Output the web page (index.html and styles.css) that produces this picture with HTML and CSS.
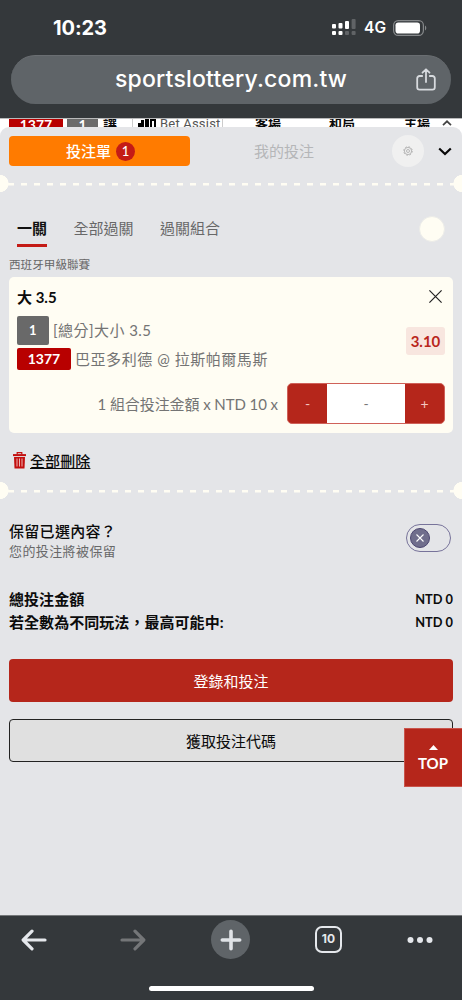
FILE: index.html
```html
<!DOCTYPE html>
<html lang="zh-Hant">
<head>
<meta charset="utf-8">
<title>投注單</title>
<link rel="stylesheet" href="styles.css">
</head>
<body>
<div class="screen">
  <header class="chrome-top">
    <div class="status">
      <span class="time">10:23</span>
      <span class="status-right">
        <svg class="signal" width="24" height="17" viewBox="0 0 24 17" fill="#fff">
          <rect x="0" y="5" width="4" height="4.6" rx="1"/><rect x="6.5" y="4" width="4" height="5.6" rx="1"/><rect x="13" y="2" width="4" height="8" rx="1"/><rect x="19.6" y="0" width="4" height="10" rx="1" opacity=".22"/>
          <rect x="0" y="12" width="4" height="4" rx="1"/><rect x="6.5" y="12" width="4" height="4" rx="1"/><rect x="13" y="12" width="4" height="4" rx="1" opacity=".22"/><rect x="19.6" y="12" width="4" height="4" rx="1" opacity=".22"/>
        </svg>
        <span class="net">4G</span>
        <svg class="battery" width="34" height="16" viewBox="0 0 34 16"><rect x=".6" y=".6" width="29.8" height="14.8" rx="4.6" fill="none" stroke="#85888a" stroke-width="1.2"/><rect x="2.5" y="2.5" width="24.5" height="11" rx="2.8" fill="#fff"/><path d="M32 5.5c1.7.7 1.7 4.3 0 5z" fill="#85888a"/></svg>
      </span>
    </div>
    <div class="url"><span class="domain">sportslottery.com.tw</span>
      <svg class="share" width="20" height="23" viewBox="0 0 20 23" fill="none" stroke="#d7dade" stroke-width="1.8" stroke-linecap="round" stroke-linejoin="round"><path d="M6.2 8H3.6A2.4 2.4 0 0 0 1.2 10.400v8.900a2.400 2.400 0 0 0 2.400 2.400h12.800a2.400 2.400 0 0 0 2.400-2.400v-8.900A2.400 2.400 0 0 0 16.400 8h-2.600M10 14V1.500M6.500 4.700 10 1.300l3.500 3.400"/></svg>
    </div>
  </header>

  <main class="page">
    <div class="behind">
      <span class="b-no">1377</span><span class="b-one">1</span><span class="b-hcp">讓</span>
      <span class="b-assist"><svg width="18" height="20" viewBox="0 0 18 20"><path d="M0 20V8h3V5h3v15zM7 20V4h4v16zM12 20V3h6v17z"/><path d="M14 20V6h2v14z" fill="#fff"/></svg>Bet Assist</span>
      <span class="b-col away">客場</span><span class="b-col draw">和局</span><span class="b-col home">主場</span>
      <svg class="b-up" width="10" height="6" viewBox="0 0 10 6" fill="none" stroke="#444" stroke-width="1.700"><path d="M1 5.200 5 1.300l4 3.900"/></svg>
    </div>

    <section class="sheet">
      <div class="tabs">
        <div class="slip">投注單<span class="count">1</span></div>
        <div class="mine">我的投注</div>
        <div class="gear"><svg width="10" height="10" viewBox="0 0 10 10" fill="none" stroke="#aaa" stroke-width=".8"><circle cx="5" cy="5" r="3.600"/><circle cx="5" cy="5" r="1.500"/><circle cx="5" cy="5" r="4.300" stroke-dasharray="1.690 1.690"/></svg></div>
        <svg class="down" width="14" height="9" viewBox="0 0 14 9" fill="none" stroke="#080808" stroke-width="2.200"><path d="M1.200 1.500 7 7l5.800-5.500"/></svg>
      </div>
      <div class="perf"></div>

      <nav class="modes"><span class="mode on">一關</span><span class="mode">全部過關</span><span class="mode">過關組合</span><i class="dot"></i></nav>
      <div class="league">西班牙甲級聯賽</div>

      <article class="card">
        <div class="card-head"><b>大 3.5</b><svg width="13" height="13" viewBox="0 0 13 13" stroke="#222" stroke-width="1.200"><path d="M.4.400l12.200 12.200M12.600.400.400 12.600"/></svg></div>
        <div class="pick">
          <div class="info">
            <div class="line1"><span class="sq">1</span><span class="market">[總分]大小 3.5</span></div>
            <div class="line2"><span class="no">1377</span><span class="teams">巴亞多利德 @ 拉斯帕爾馬斯</span></div>
          </div>
          <span class="odds">3.10</span>
        </div>
        <div class="stake"><span class="stake-text">1 組合投注金額 x NTD 10 x</span>
          <div class="stepper"><span>-</span><span class="value">-</span><span>+</span></div>
        </div>
      </article>

      <div class="clear">
        <svg width="13" height="17" viewBox="0 0 13 17" fill="none" stroke="#c20f0f"><path d="M0 3.100h13" stroke-width="2"/><path d="M4.200 2.500V.7h4.600v1.800" stroke-width="1.200"/><path d="M1 5h11l-.5 11.500h-10z" fill="#c20f0f" stroke="none"/><path d="M4 6.500v8M6.500 6.500v8M9 6.500v8" stroke="#f0c8c8" stroke-width=".9"/></svg>
        <span>全部刪除</span>
      </div>
      <div class="perf"></div>

      <div class="keep">
        <div class="keep-text"><div class="keep-title">保留已選內容？</div><div class="keep-sub">您的投注將被保留</div></div>
        <div class="toggle"><span class="knob"><svg width="8" height="8" viewBox="0 0 8 8" stroke="#fff" stroke-width="1.100"><path d="M.5.500l7 7M7.500.500l-7 7"/></svg></span></div>
      </div>

      <div class="totals">
        <div class="total"><span class="label">總投注金額</span><span class="amount">NTD 0</span></div>
        <div class="total"><span class="label">若全數為不同玩法，最高可能中:</span><span class="amount">NTD 0</span></div>
      </div>
      <div class="btn primary">登錄和投注</div>
      <div class="btn outline">獲取投注代碼</div>
    </section>
    <div class="top"><svg width="9" height="5" viewBox="0 0 9 5" fill="#fff"><path d="M0 5 4.500 0 9 5z"/></svg>TOP</div>
  </main>

  <footer class="chrome-bottom">
    <div class="tools">
      <svg width="26" height="22" viewBox="0 0 26 22" fill="none" stroke="#e5e8ec" stroke-width="3.200" stroke-linecap="round" stroke-linejoin="round"><path d="M24 11H2.500M11 2.200 2.200 11l8.800 8.800"/></svg>
      <svg class="forward" width="26" height="22" viewBox="0 0 26 22" fill="none" stroke="#747678" stroke-width="3.200" stroke-linecap="round" stroke-linejoin="round"><path d="M2 11h21.500M15 2.200l8.800 8.800-8.800 8.800"/></svg>
      <div class="new"><svg width="22" height="22" viewBox="0 0 22 22" stroke="#e0e3e7" stroke-width="3.600" stroke-linecap="round"><path d="M11 2.300v17.400M2.300 11h17.400"/></svg></div>
      <div class="count-tabs">10</div>
      <svg width="26" height="8" viewBox="0 0 26 8" fill="#e5e8ec"><circle cx="3.500" cy="4" r="3"/><circle cx="13" cy="4" r="3"/><circle cx="22.500" cy="4" r="3"/></svg>
    </div>
    <div class="home-bar"></div>
  </footer>
</div>
</body>
</html>
```
FILE: styles.css
```css
* { box-sizing: border-box; }
body { margin: 0; font-family: Lato, "Noto Sans CJK TC", sans-serif; color: #0b0b0b; }
svg { display: block; flex: none; }
.screen { width: 462px; height: 1000px; display: flex; flex-direction: column; overflow: hidden; }

.chrome-top { height: 118px; background: #34383b; flex: none; padding: 0 11px; font-family: Inter, sans-serif; color: #fff; }
.status { height: 55px; display: flex; justify-content: space-between; align-items: center; padding: 0 24px 0 42px; }
.time { font-size: 20px; font-weight: 700; letter-spacing: -.1px; line-height: 24px; }
.status-right { display: flex; align-items: center; }
.net { font-size: 15.5px; font-weight: 600; margin: 1px 7px 0 8px; line-height: 20px; }
.url { height: 49px; border-radius: 25px; background: #5f6468; display: flex; align-items: center; padding: 0 15px 1px 104px; justify-content: space-between; border-top: 1px solid #6a6e72; }
.domain { font-size: 23px; font-weight: 500; white-space: nowrap; letter-spacing: .2px; margin-top: -1px; }

.page { position: relative; height: 797px; background: #fff; flex: none; }
.behind { height: 9px; overflow: hidden; display: flex; align-items: flex-start; padding: 0 9px; font-size: 12px; line-height: 12px; border-top: 1px solid #b9babb; white-space: nowrap; }
.b-no, .b-one { height: 10px; color: #fff; text-align: center; font-weight: 700; font-size: 14px; line-height: 11px; }
.b-no { width: 54px; background: #b80000; }
.b-one { width: 31px; background: #6b6b6b; margin-left: 4px; }
.b-hcp { margin-left: 5px; font-size: 14px; line-height: 10px; font-weight: 700; width: 29px; }
.b-assist { display: flex; gap: 4px; width: 91px; border: 1px solid #ccc; border-width: 0 1px; padding-left: 5px; color: #555; font: 13px/10px Roboto, sans-serif; letter-spacing: .2px; }
.b-assist svg { margin-top: -4px; }
.b-col { font-size: 13px; font-weight: 700; line-height: 9px; width: 26px; }
.away { margin-left: 32px; }
.draw { margin-left: 48px; }
.home { margin-left: 49px; }
.b-up { margin: 1px 0 0 12px; }

.sheet { height: 788px; background: #e4e5e8; border-radius: 9px 9px 0 0; }
.tabs { height: 48px; display: flex; align-items: center; padding: 0 10px 0 9px; }
.slip { width: 181px; height: 30px; border-radius: 4px; background: #ff7b00; color: #fff; font-size: 15px; font-weight: 500; display: flex; align-items: center; justify-content: center; gap: 5px; padding: 0 0 1px 2px; }
.count { width: 19px; height: 19px; border-radius: 50%; background: #c41b16; font-size: 13px; line-height: 19px; text-align: center; margin-top: 1px; }
.mine { width: 203px; text-align: center; padding: 0 15px 2px 0; color: #b5b6b8; font-size: 15px; }
.gear { width: 32px; height: 32px; border-radius: 50%; background: #f0f0f0; display: grid; place-items: center; margin-right: 1px; margin-left: -1px; }
.down { margin: 1px 0 0 13px; }
.perf { height: 17px; margin-bottom: 24px; background:
  radial-gradient(circle at 0 50%, #fffdf3 8.300px, transparent 8.800px),
  radial-gradient(circle at 462px 50%, #fffdf3 8.300px, transparent 8.800px),
  repeating-linear-gradient(90deg, #fffdf3 0 1px, transparent 1px 7.700px, #fffdf3 7.700px 13px) no-repeat 0 8px / 100% 2.500px; }

.modes { height: 56px; display: flex; gap: 26.500px; padding: 0 17px 29px; align-items: center; font-size: 15px; color: #686868; margin-top: -1px; line-height: 22px; }
.mode { margin-top: -1px; }
.mode.on { color: #111; font-weight: 700; position: relative; }
.mode.on::after { content: ""; position: absolute; left: 0; right: 0; top: 27px; height: 3px; background: #c41b16; }
.dot { flex: none; width: 26px; height: 26px; border-radius: 50%; background: #fffdf3; margin-left: auto; border: 1px solid #ecece8; margin-top: 1px; }
.league { height: 23px; margin: -17px 9px 0; font-size: 11.600px; line-height: 21px; color: #686868; }

.card { margin: 0 9px; height: 156px; border-radius: 5px; background: #fffdf3; padding: 0 8px; }
.card-head { height: 38px; display: flex; justify-content: space-between; align-items: center; padding: 0 3px 0 0; font-size: 15px; }
.pick { height: 57px; display: flex; justify-content: space-between; align-items: center; color: #747474; }
.line1 { height: 31px; display: flex; align-items: center; gap: 4px; font-size: 15px; letter-spacing: .45px; }
.line2 { height: 26px; display: flex; align-items: center; gap: 4px; font-size: 15px; letter-spacing: .55px; }
.market, .teams { margin-top: -2px; }
.sq, .no { color: #fff; font-weight: 700; text-align: center; border-radius: 2px; font-size: 13px; }
.sq { width: 32px; height: 29px; line-height: 29px; background: #696969; }
.no { width: 54px; height: 22px; line-height: 22px; background: #b80000; font-size: 14px; letter-spacing: 0; }
.odds { width: 39px; height: 28px; border-radius: 3px; background: #f8e6df; color: #b9261b; font-weight: 700; font-size: 15px; line-height: 28px; text-align: center; margin-bottom: 5px; }
.stake { height: 42px; margin-top: 10px; display: flex; justify-content: flex-end; align-items: center; gap: 9px; }
.stake-text { font-size: 15px; color: #747474; letter-spacing: -.08px; }
.stepper { width: 158px; height: 41px; border: 1px solid #cf6159; border-radius: 5px; background: #b5261b; display: grid; grid-template-columns: 39px 1fr 39px; overflow: hidden; color: #f3c6c2; font-size: 14px; text-align: center; line-height: 39px; }
.value { background: #fff; color: #777; }

.clear { height: 49px; display: flex; align-items: center; gap: 4px; padding: 6px 13px 0; font-size: 15px; text-decoration: underline; font-weight: 500; letter-spacing: .1px; }
.keep { display: flex; justify-content: space-between; height: 41px; padding: 0 11px 0 9px; }
.keep-text { margin-top: -2px; }
.keep-title { font-size: 15px; font-weight: 500; letter-spacing: .3px; line-height: 20px; }
.keep-sub { font-size: 13px; letter-spacing: .4px; line-height: 20px; color: #686868; }
.toggle { width: 45px; height: 28px; border: 1.500px solid #77739a; border-radius: 14px; padding: 3px; margin-top: 1px; }
.knob { width: 20px; height: 20px; border-radius: 50%; background: #706e8c; border: 1.500px solid #4c4670; display: grid; place-items: center; }

.totals { margin: 23px 9px 26px; }
.total { height: 23px; display: flex; justify-content: space-between; align-items: center; font-size: 15px; font-weight: 700; letter-spacing: .05px; }
.amount { font-size: 12.800px; letter-spacing: 0; }
.btn { height: 43px; margin: 0 9px 17px; border-radius: 4px; display: grid; place-items: center; font-size: 15px; padding-bottom: 1px; }
.primary { background: #b5261b; color: #fff; }
.outline { background: #e0e0e0; border: 1px solid #222; }
.top { position: absolute; right: 0; top: 610px; width: 58px; height: 59px; background: #b5261b; border: 1px solid #c9544b; border-right: 0; color: #fff; font-size: 15px; font-weight: 700; line-height: 18px; display: flex; flex-direction: column; align-items: center; padding: 16px 1px 0 0; gap: 4px; }

.chrome-bottom { height: 85px; background: #34383b; border-top: 1px solid #747779; flex: none; }
.tools { height: 47px; display: flex; align-items: center; gap: 65px; padding-left: 21px; }
.forward { margin-left: 8px; }
.new { flex: none; width: 39px; height: 39px; border-radius: 50%; background: #5f6468; display: grid; place-items: center; }
.count-tabs { flex: none; width: 27px; height: 27px; border: 2.500px solid #e5e8ec; border-radius: 7px; color: #e5e8ec; font: 700 12px/22px Inter, sans-serif; text-align: center; }
.home-bar { width: 165px; height: 5px; border-radius: 3px; background: #fff; margin: 23px auto 0; }
```
